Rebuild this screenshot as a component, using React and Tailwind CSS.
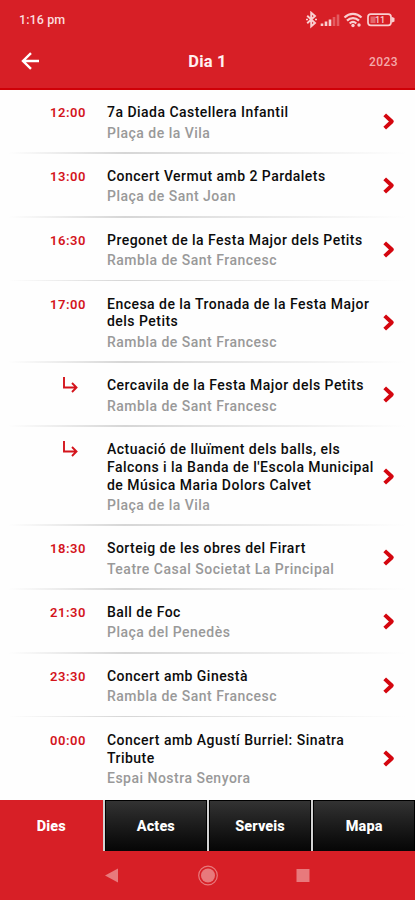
import clsx from 'clsx'

const EVENTS = [
  { time: '12:00', title: ['7a Diada Castellera Infantil'], place: 'Plaça de la Vila' },
  { time: '13:00', title: ['Concert Vermut amb 2 Pardalets'], place: 'Plaça de Sant Joan' },
  { time: '16:30', title: ['Pregonet de la Festa Major dels Petits'], place: 'Rambla de Sant Francesc' },
  { time: '17:00', title: ['Encesa de la Tronada de la Festa Major', 'dels Petits'], place: 'Rambla de Sant Francesc' },
  { time: null, title: ['Cercavila de la Festa Major dels Petits'], place: 'Rambla de Sant Francesc' },
  {
    time: null,
    title: ['Actuació de lluïment dels balls, els', "Falcons i la Banda de l'Escola Municipal", 'de Música Maria Dolors Calvet'],
    place: 'Plaça de la Vila',
  },
  { time: '18:30', title: ['Sorteig de les obres del Firart'], place: 'Teatre Casal Societat La Principal' },
  { time: '21:30', title: ['Ball de Foc'], place: 'Plaça del Penedès' },
  { time: '23:30', title: ['Concert amb Ginestà'], place: 'Rambla de Sant Francesc' },
  { time: '00:00', title: ['Concert amb Agustí Burriel: Sinatra', 'Tribute'], place: 'Espai Nostra Senyora' },
]

const TABS = ['Dies', 'Actes', 'Serveis', 'Mapa']

function StatusBar() {
  return (
    <div className="flex h-[38px] items-center justify-between pl-[19px] pr-[19px] pt-[2px]">
      <span className="text-[12.5px] font-medium tracking-[0.1px] text-[#fbdcdd]">1:16 pm</span>
      <svg width="90" height="18" viewBox="0 0 90 18" fill="none" className="text-[#f9cfd0]">
        {/* bluetooth */}
        <path d="M1.2 4.8 9 12 5.2 15.3V1.7L9 5 1.2 12.2" stroke="currentColor" strokeWidth="1.9" />
        <path d="M0 8.5h2M9 8.5h2" stroke="currentColor" strokeWidth="1.7" />
        {/* signal */}
        <path d="M16 15v-2.5M20 15v-4.5M24 15V8.500" stroke="currentColor" strokeWidth="2.6" />
        <path d="M28 15V6M32 15V3.5" stroke="currentColor" strokeWidth="2.6" opacity=".35" />
        {/* wifi */}
        <g stroke="currentColor" strokeWidth="2.2">
          <path d="M38.5 6.5c5-4.8 12-4.8 17 0" />
          <path d="M41 9.6c3.5-3.4 8.5-3.4 12 0" />
          <path d="M43.7 12.5c2-1.9 4.6-1.9 6.6 0" />
        </g>
        <circle cx="47" cy="14.5" r="1.7" fill="currentColor" />
        <circle cx="53" cy="14" r="1.7" fill="currentColor" />
        {/* battery */}
        <rect x="62" y="3.2" width="23" height="11.2" rx="2.8" stroke="currentColor" strokeWidth="1.7" />
        <path d="M85.5 5.8l3 1.3v3.4l-3 1.3z" fill="currentColor" />
        <path d="M64.5 5.5h5v6.6h-5z" fill="currentColor" opacity=".4" />
        <text x="69" y="12" fontSize="9" fontWeight="500" fill="currentColor">11</text>
      </svg>
    </div>
  )
}

function Header() {
  return (
    <header className="h-[90px] shrink-0 border-b-2 border-[#cf0007]">
      <StatusBar />
      <div className="grid h-[48px] grid-cols-3 items-center pl-[21px] pr-[17px]">
        <svg width="19" height="18" viewBox="0 0 19 18" fill="none" stroke="#fff" strokeWidth="2.4" className="mt-[-2px]">
          <path d="M18 9H2M10 1.2 2 9l8 7.8" />
        </svg>
        <h1 className="mr-[4px] text-center text-[16.5px] font-bold tracking-[0.15px] text-[#fff0f0]">Dia 1</h1>
        <span className="text-right text-[12px] font-medium tracking-[0.4px] text-[#f4a9ab]">2023</span>
      </div>
    </header>
  )
}

function EventRow({ event, last }) {
  return (
    <li>
      <div className="flex pb-[9.8px] pl-[50px] pr-[20px] pt-[14.3px]">
        <div className="w-[57px] shrink-0 text-[13px] font-semibold leading-[17.8px] tracking-[0.55px] text-[#d4141c]">
          {event.time ?? (
            <svg width="15" height="16" viewBox="0 0 15 16" fill="none" stroke="currentColor" strokeWidth="1.9" className="ml-[13px]">
              <path d="M1 0v10.5h12M9 6l4.5 4.5L9 15" />
            </svg>
          )}
        </div>
        <div className="grow whitespace-nowrap">
          {event.title.map((line) => (
            <p key={line} className="text-[14px] font-medium leading-[17.8px] tracking-[0.47px] text-[#0c0c0c]">{line}</p>
          ))}
          <p className="mt-[2.5px] text-[14px] font-medium leading-[17.8px] tracking-[0.49px] text-[#999]">{event.place}</p>
        </div>
        <svg width="12" height="17" viewBox="0 0 12 17" fill="none" stroke="#d4060f" strokeWidth="3.9" strokeLinejoin="round" className="mt-[-3px] shrink-0 self-center">
          <path d="M1.700 1.800 8.800 8.500 1.700 15.200" />
        </svg>
      </div>
      <div
        className={clsx(
          'h-[1.6px] bg-linear-to-r from-transparent from-2% via-[#d6d6d6] via-30% to-transparent to-98%',
          last && 'hidden',
        )}
      />
    </li>
  )
}

function TabBar() {
  return (
    <nav className="flex h-[51px] shrink-0 bg-[#d2d2d2]">
      {TABS.map((tab, i) => (
        <div
          key={tab}
          className={clsx(
            'flex items-center justify-center pt-[2px] text-[14.5px] font-extrabold tracking-[0.1px] text-white',
            i === 0 ? 'w-[102.5px] bg-[#d71f26]' : 'ml-[2.5px] flex-1 border-x border-t border-black bg-linear-to-b from-[#333] to-[#060606]',
          )}
        >
          {tab}
        </div>
      ))}
    </nav>
  )
}

function SystemNav() {
  return (
    <div className="flex h-[49px] shrink-0 items-center justify-center">
      <svg width="208" height="22" viewBox="0 0 208 22" fill="#e8797c" className="ml-[1px]">
        <path d="M1 10.5 14 3.5v14z" />
        <circle cx="104" cy="10.5" r="7" />
        <circle cx="104" cy="10.5" r="9.3" fill="none" stroke="#e8797c" strokeWidth="1.2" />
        <path d="M192.5 4h13v13h-13z" />
      </svg>
    </div>
  )
}

export default function App() {
  return (
    <div className="flex h-[900px] w-[415px] flex-col overflow-hidden bg-[#d71f26] font-['Roboto',sans-serif]">
      <Header />
      <ul className="h-[710px] shrink-0 overflow-hidden bg-[#fefefe]">
        {EVENTS.map((event, i) => (
          <EventRow key={i} event={event} last={i === EVENTS.length - 1} />
        ))}
      </ul>
      <TabBar />
      <SystemNav />
    </div>
  )
}
